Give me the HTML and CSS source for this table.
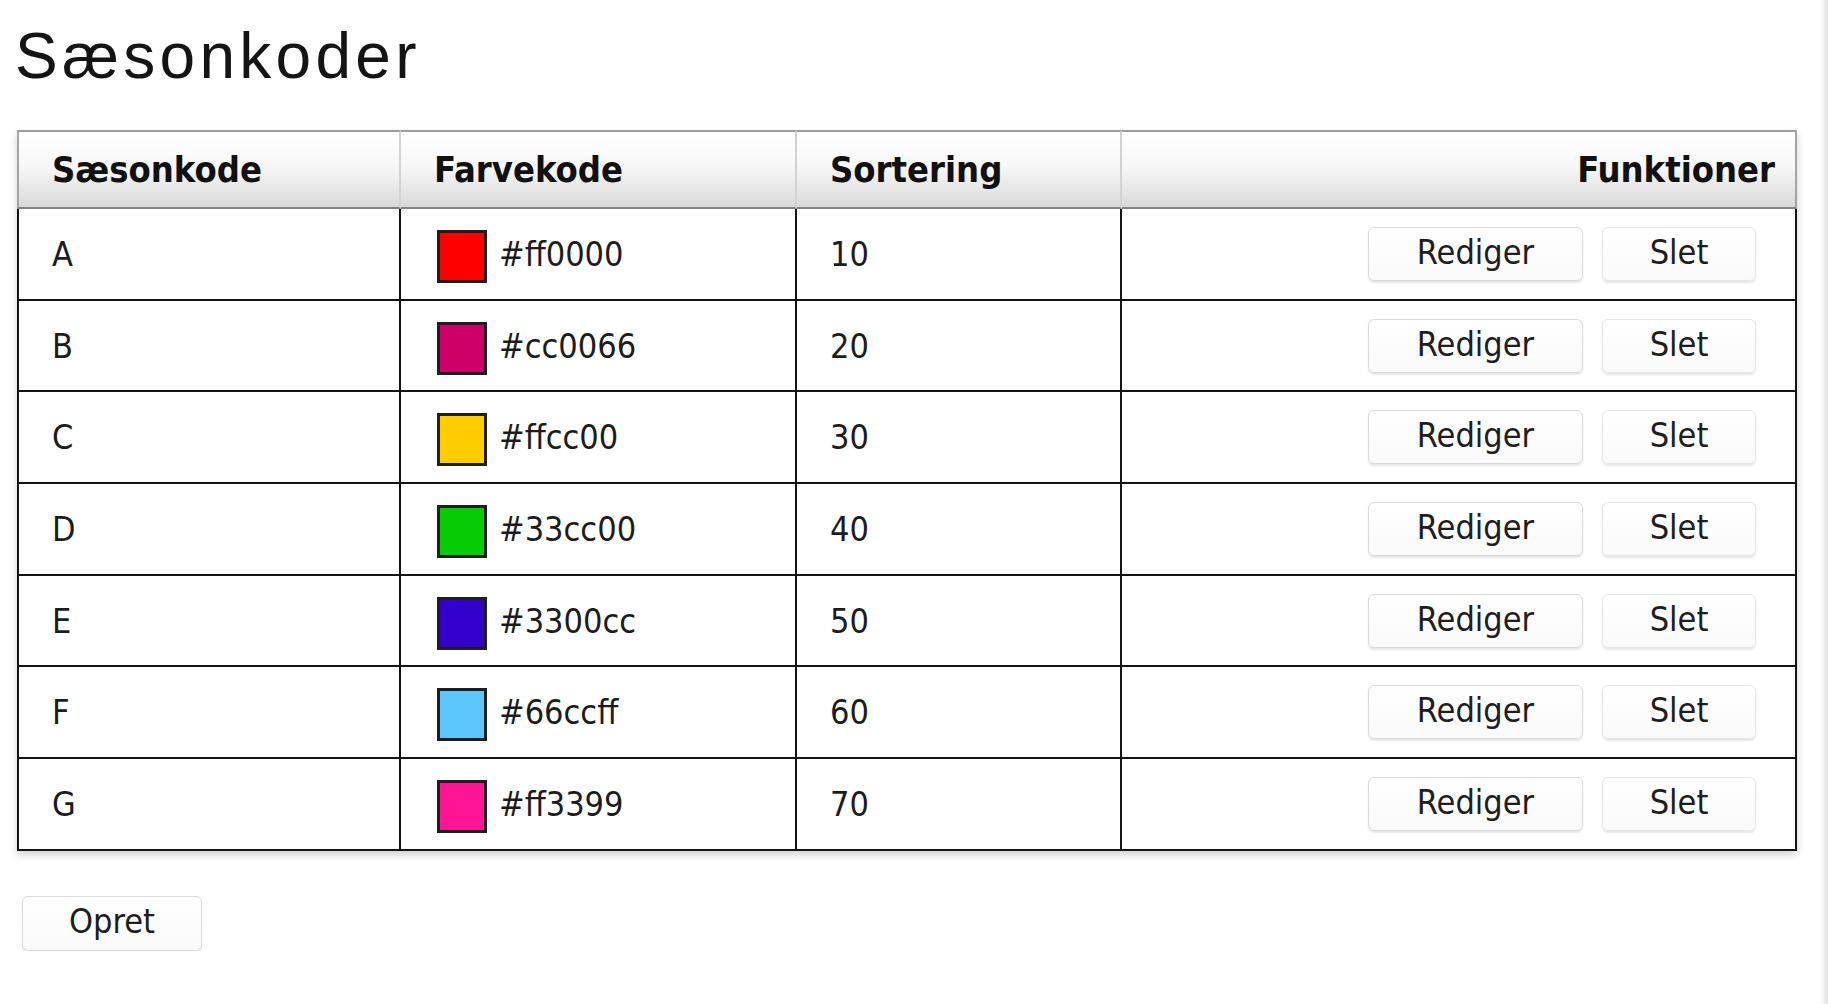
FILE: index.html
```html
<!DOCTYPE html>
<html lang="da">
<head>
<meta charset="utf-8">
<title>Sæsonkoder</title>
<link rel="stylesheet" href="styles.css">
</head>
<body>
<div class="page">
  <h1 class="title">Sæsonkoder</h1>
  <table class="codes">
    <thead>
      <tr>
        <th class="c1 first">Sæsonkode</th>
        <th class="c2">Farvekode</th>
        <th class="c3">Sortering</th>
        <th class="c4 fn">Funktioner</th>
      </tr>
    </thead>
    <tbody>
      <tr>
        <td class="first">A</td>
        <td><span class="swatch" style="background:#ff0000"></span>#ff0000</td>
        <td>10</td>
        <td class="actions"><div class="btns"><button class="btn edit">Rediger</button><button class="btn del">Slet</button></div></td>
      </tr>
      <tr>
        <td class="first">B</td>
        <td><span class="swatch" style="background:#cc0066"></span>#cc0066</td>
        <td>20</td>
        <td class="actions"><div class="btns"><button class="btn edit">Rediger</button><button class="btn del">Slet</button></div></td>
      </tr>
      <tr>
        <td class="first">C</td>
        <td><span class="swatch" style="background:#ffcc00"></span>#ffcc00</td>
        <td>30</td>
        <td class="actions"><div class="btns"><button class="btn edit">Rediger</button><button class="btn del">Slet</button></div></td>
      </tr>
      <tr>
        <td class="first">D</td>
        <td><span class="swatch" style="background:#05cc05"></span>#33cc00</td>
        <td>40</td>
        <td class="actions"><div class="btns"><button class="btn edit">Rediger</button><button class="btn del">Slet</button></div></td>
      </tr>
      <tr>
        <td class="first">E</td>
        <td><span class="swatch" style="background:#3300cc"></span>#3300cc</td>
        <td>50</td>
        <td class="actions"><div class="btns"><button class="btn edit">Rediger</button><button class="btn del">Slet</button></div></td>
      </tr>
      <tr>
        <td class="first">F</td>
        <td><span class="swatch" style="background:#5ec6ff"></span>#66ccff</td>
        <td>60</td>
        <td class="actions"><div class="btns"><button class="btn edit">Rediger</button><button class="btn del">Slet</button></div></td>
      </tr>
      <tr>
        <td class="first">G</td>
        <td><span class="swatch" style="background:#ff1493"></span>#ff3399</td>
        <td>70</td>
        <td class="actions"><div class="btns"><button class="btn edit">Rediger</button><button class="btn del">Slet</button></div></td>
      </tr>
    </tbody>
  </table>
  <div class="footer">
    <button class="btn create">Opret</button>
  </div>
</div>
</body>
</html>
```

FILE: styles.css
```css
html {
  background: linear-gradient(to left, #e9e9e9 0, #e9e9e9 3px, #f7f7f7 5px, #ffffff 9px);
  min-height: 100%;
}
body {
  margin: 0;
  font-family: "DejaVu Sans Condensed", "DejaVu Sans", sans-serif;
  font-stretch: condensed;
  color: #1c1c1c;
}
.page {
  padding: 19px 0 0 0;
}
.title {
  margin: 0;
  padding-left: 15px;
  font-family: "Liberation Sans", Arial, sans-serif;
  font-stretch: normal;
  font-weight: 400;
  font-size: 64px;
  line-height: 74px;
  letter-spacing: 4.3px;
  color: #141414;
}
.codes {
  margin: 37px 0 0 17px;
  width: 1780px;
  table-layout: fixed;
  border-collapse: separate;
  border-spacing: 0;
  box-shadow: 0 4px 8px rgba(0, 0, 0, 0.18);
}
.codes th, .codes td {
  box-sizing: border-box;
  padding: 0 0 0 33px;
  text-align: left;
  vertical-align: middle;
}
.codes th {
  height: 79px;
  font-weight: 700;
  font-size: 36px;
  color: #111;
  background: linear-gradient(#ffffff 0%, #f7f7f7 45%, #e2e2e2 85%, #d8d8d8 100%);
  border-top: 2px solid #9c9c9c;
  border-bottom: 2px solid #808080;
  border-right: 2px solid #d2d2d2;
}
.codes th.first {
  border-left: 2px solid #a5a5a5;
}
.codes th.fn {
  text-align: right;
  padding-right: 20px;
  border-right: 2px solid #a5a5a5;
}
.c1 { width: 384px; }
.c2 { width: 396px; }
.c3 { width: 325px; }
.c4 { width: 675px; }
.codes td {
  height: 91.7px;
  font-size: 34px;
  border-right: 2px solid #141414;
  border-bottom: 2px solid #141414;
  background: #fff;
}
.codes td.first {
  border-left: 2px solid #141414;
}
.swatch {
  display: inline-block;
  vertical-align: middle;
  width: 50px;
  height: 53px;
  margin: -14px 12px -14px 3px;
  box-sizing: border-box;
  border: 3px solid #1e1e1e;
}
.codes td.actions {
  padding: 0 39px 0 0;
}
.btns {
  display: flex;
  justify-content: flex-end;
  align-items: center;
  gap: 19px;
}
.btn {
  box-sizing: border-box;
  height: 54px;
  padding: 0 0 4px 0;
  font-family: "DejaVu Sans Condensed", "DejaVu Sans", sans-serif;
  font-stretch: condensed;
  font-size: 34px;
  color: #1e1e1e;
  background: linear-gradient(#ffffff, #fafafa);
  border: 1px solid #d9d9d9;
  border-radius: 6px;
  box-shadow: 0 2px 2px rgba(0, 0, 0, 0.10);
}
.btn.edit { width: 215px; }
.btn.del { width: 154px; border-color: #e6e6e6; }
.footer {
  padding: 45px 0 0 22px;
}
.btn.create {
  width: 180px;
  height: 55px;
}
```
